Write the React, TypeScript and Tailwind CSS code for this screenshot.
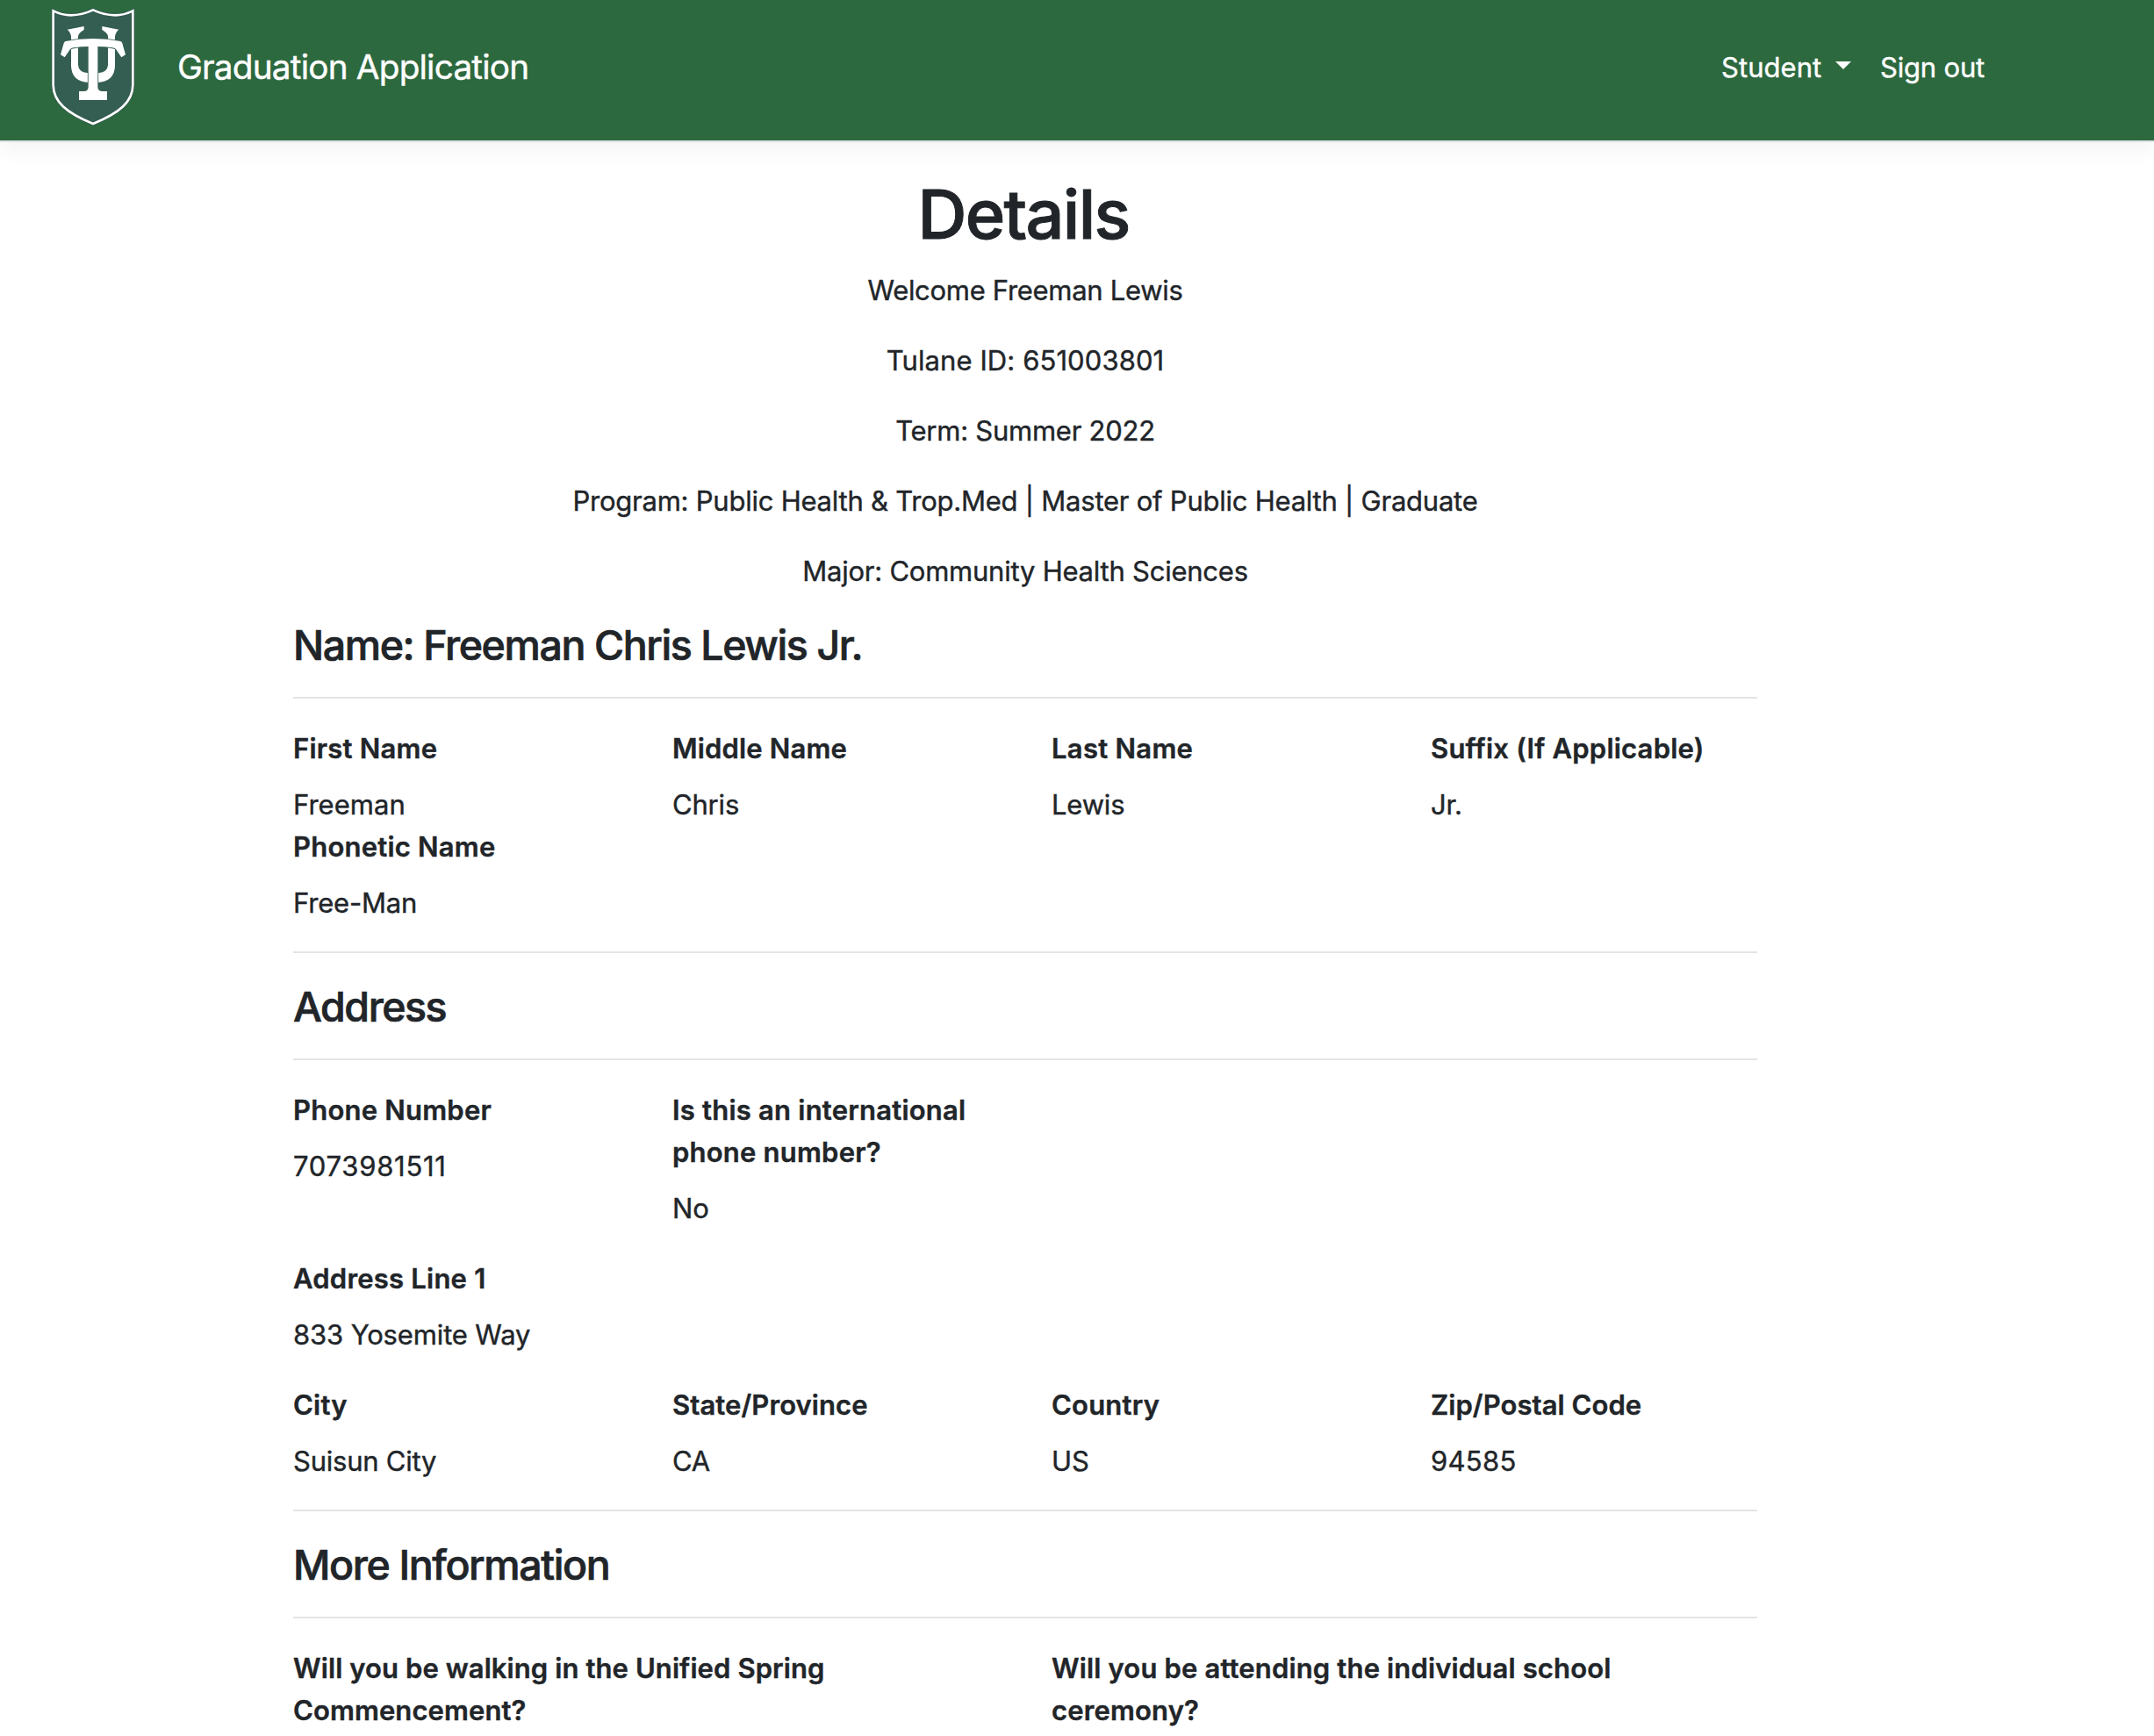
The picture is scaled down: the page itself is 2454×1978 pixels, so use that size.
import React from 'react';

type FieldProps = {
  label: string;
  value?: string;
  labelClass?: string;
  valueClass?: string;
  className?: string;
};

function Field({ label, value, labelClass = 'tracking-[0.007em]', valueClass = 'tracking-[-0.006em]', className = '' }: FieldProps) {
  return (
    <div className={`pr-[60px] ${className}`}>
      <div className={`mb-4 font-semibold ${labelClass}`}>{label}</div>
      {value && <div className={valueClass}>{value}</div>}
    </div>
  );
}

function Row({ children, className = '' }: { children: React.ReactNode; className?: string }) {
  return <div className={`-mr-[60px] grid grid-cols-4 ${className}`}>{children}</div>;
}

function Rule() {
  return <hr className="mt-[31px] mb-[33px] h-0.5 border-0 bg-[#e4e4e4]" />;
}

function SectionTitle({ children, className = '' }: { children: React.ReactNode; className?: string }) {
  return (
    <h2 className={`h-14 text-[46.5px] leading-[57.6px] font-medium [-webkit-text-stroke:0.7px] ${className}`}>
      {children}
    </h2>
  );
}

function ShieldLogo() {
  const shield =
    'M62 37 Q92 52 122 52 Q162 51 198 34 Q234 51 274 52 Q304 52 334 37 V290 C334 348 288 386 198 423 C108 386 62 348 62 290 Z';
  return (
    <svg viewBox="0 0 390 480" className="h-40 w-[130px] shrink-0" aria-hidden="true">
      <path d={shield} fill="#355e53" stroke="#31594f" strokeWidth="13" />
      <path d={shield} fill="none" stroke="#ffffff" strokeWidth="8" />
      <g fill="#ffffff">
        <path d="M110 101 L167 90 V102 Q149 112 147 124 V222 Q148 248 184 250 V282 Q125 280 123 226 V124 Q121 110 110 101 Z" />
        <path d="M286 101 L229 90 V102 Q247 112 249 124 V222 Q248 248 212 250 V282 Q271 280 273 226 V124 Q275 110 286 101 Z" />
        <path
          d="M104 141 Q150 132 198 132 Q246 132 292 141 Q296 142 298 148 L309 187 L295 196 L276 168 Q272 164 264 163 Q238 159 214 159 V296 Q214 312 230 312 H246 V342 H150 V312 H166 Q182 312 182 296 V159 Q158 159 132 163 Q124 164 120 168 L101 196 L87 187 L98 148 Q100 142 104 141 Z"
          stroke="#355e53"
          strokeWidth="5"
          paintOrder="stroke"
        />
      </g>
    </svg>
  );
}

export default function App() {
  return (
    <div className="h-[1978px] w-full overflow-hidden bg-white font-[Inter,sans-serif] text-[31px] leading-[48px] text-[#212529] [-webkit-text-stroke:0.4px]">
      <header className="flex h-[162px] items-start border-b-2 border-[#dee2e6] bg-[#2d693e] pl-10 text-white shadow-[0_8px_24px_rgba(0,0,0,0.05)]">
        <ShieldLogo />
        <span className="mt-[46px] ml-8 text-[38.75px] leading-[60px] tracking-[-0.021em]">Graduation Application</span>
        <nav className="mt-[53px] ml-auto flex w-[493px]">
          <a className="flex w-[181px] tracking-[0.002em]">
            Student
            <svg viewBox="0 0 18 9" className="mt-[17px] ml-4 h-[9px] w-[18px]" aria-hidden="true">
              <path d="M0 0H18L9 9Z" fill="currentColor" />
            </svg>
          </a>
          <a className="tracking-[-0.006em]">Sign out</a>
        </nav>
      </header>

      <main className="mt-[34px] ml-[334px] w-[1668px]">
        <div className="text-center">
          <h1 className="mb-[15px] pr-1 text-[77.5px] leading-[96px] font-medium tracking-[-0.022em] [-webkit-text-stroke:1px]">
            Details
          </h1>
          <p className="mb-8 tracking-[-0.0097em]">Welcome Freeman Lewis</p>
          <p className="mb-8 tracking-[0.003em]">Tulane ID: 651003801</p>
          <p className="mb-8 tracking-[-0.008em]">Term: Summer 2022</p>
          <p className="mb-8 tracking-[-0.0076em]">
            Program: Public Health &amp; Trop.Med | Master of Public Health | Graduate
          </p>
          <p className="mb-8 tracking-[-0.0075em]">Major: Community Health Sciences</p>
        </div>

        <SectionTitle className="tracking-[-0.0303em]">Name: Freeman Chris Lewis Jr.</SectionTitle>
        <Rule />
        <Row>
          <Field label="First Name" value="Freeman" valueClass="tracking-[0.001em]" />
          <Field label="Middle Name" value="Chris" labelClass="tracking-[0.005em]" />
          <Field label="Last Name" value="Lewis" labelClass="tracking-[0.009em]" />
          <Field label="Suffix (If Applicable)" value="Jr." />
          <Field label="Phonetic Name" value="Free-Man" />
        </Row>
        <Rule />

        <SectionTitle className="tracking-[-0.032em]">Address</SectionTitle>
        <Rule />
        <Row>
          <Field label="Phone Number" value="7073981511" valueClass="tracking-[0.024em]" />
          <Field label="Is this an international phone number?" value="No" />
        </Row>
        <Row className="mt-8">
          <Field label="Address Line 1" value="833 Yosemite Way" valueClass="tracking-[-0.0045em]" />
        </Row>
        <Row className="mt-8">
          <Field label="City" value="Suisun City" valueClass="tracking-[-0.0076em]" />
          <Field label="State/Province" value="CA" labelClass="tracking-[0.003em]" />
          <Field label="Country" value="US" />
          <Field label="Zip/Postal Code" value="94585" labelClass="tracking-[0.002em]" valueClass="tracking-[0.01em]" />
        </Row>
        <Rule />

        <SectionTitle className="tracking-[-0.0295em]">More Information</SectionTitle>
        <Rule />
        <Row>
          <Field
            className="col-span-2"
            label="Will you be walking in the Unified Spring Commencement?"
            labelClass="w-[700px] tracking-[0.003em]"
          />
          <Field
            className="col-span-2"
            label="Will you be attending the individual school ceremony?"
            labelClass="w-[700px] tracking-[0.005em]"
          />
        </Row>
      </main>
    </div>
  );
}
